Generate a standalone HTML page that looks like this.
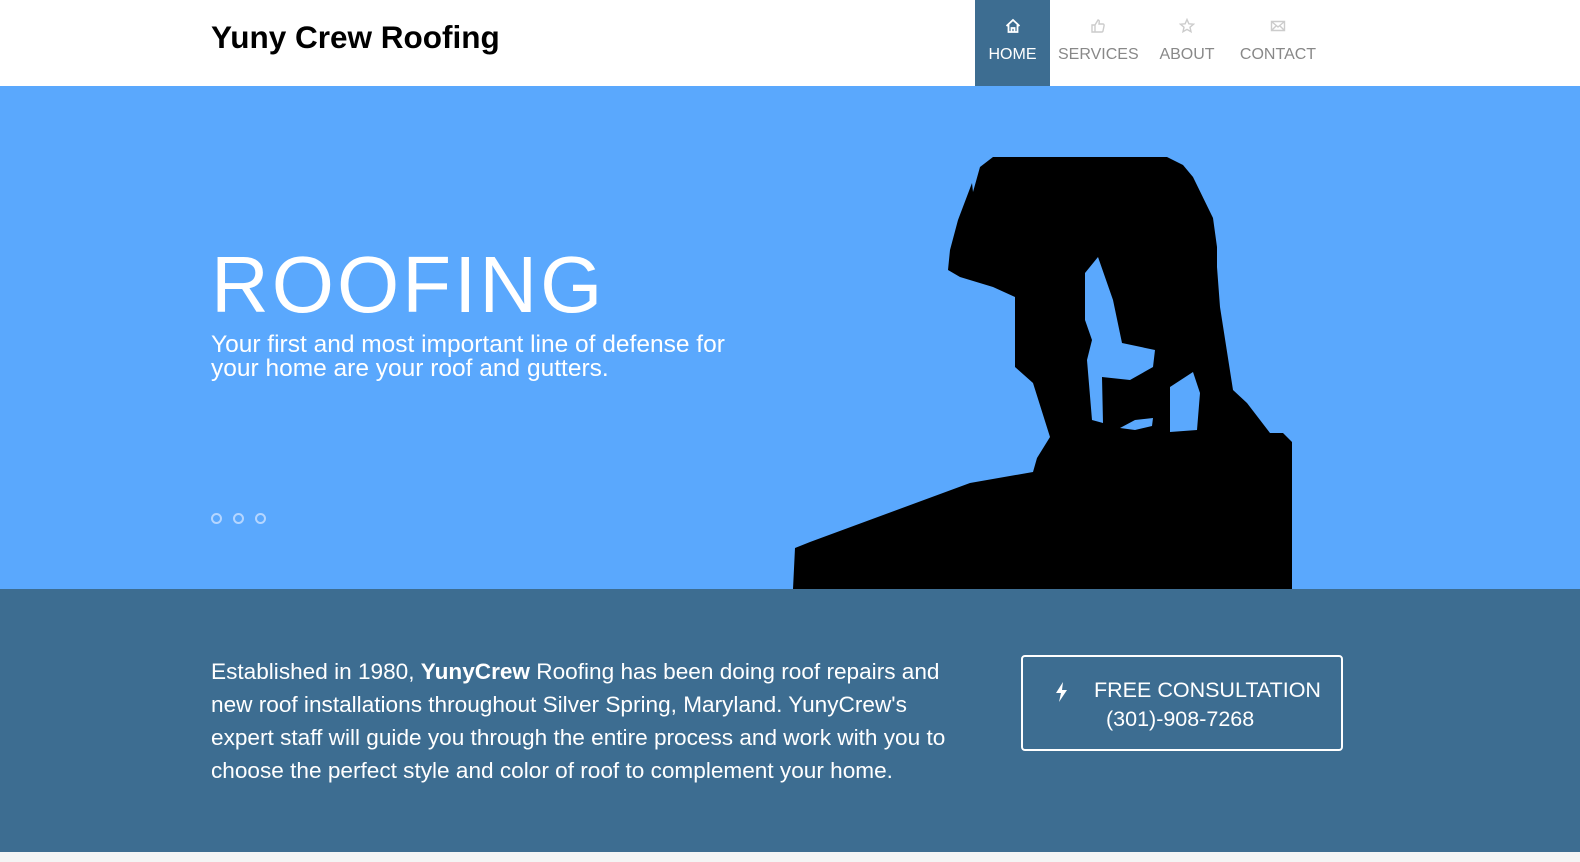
<!DOCTYPE html>
<html><head><meta charset="utf-8"><style>
*{margin:0;padding:0;box-sizing:border-box}
body{width:1580px;height:862px;overflow:hidden;font-family:"Liberation Sans",sans-serif;background:#f4f4f4;position:relative}
.hdr{position:absolute;left:0;top:0;width:1580px;height:86px;background:#fff}
.logo{position:absolute;left:211px;top:19px;font-size:31.5px;font-weight:bold;color:#000;letter-spacing:0}
.nav{position:absolute;top:0;height:86px;text-align:center;font-size:16px;color:#888}
.nav svg{position:absolute;top:18px;left:50%;margin-left:-8px}
.nav span{position:absolute;top:46px;left:0;right:0}
.hero{position:absolute;left:0;top:86px;width:1580px;height:503px;background:#5aa8fd}
.h1{position:absolute;left:211px;top:240px;font-size:80px;color:#fff;letter-spacing:3px;line-height:90px}
.sub{position:absolute;left:211px;top:333px;font-size:24.5px;color:#fff;line-height:24px;white-space:nowrap}
.dot{position:absolute;top:513px;width:11px;height:11px;border:2px solid #b5d6ff;border-radius:50%}
.bot{position:absolute;left:0;top:589px;width:1580px;height:263px;background:#3d6d91}
.txt{position:absolute;left:211px;top:655px;font-size:22.6px;line-height:33px;color:#fff;white-space:nowrap}
.btn{position:absolute;left:1021px;top:655px;width:322px;height:96px;border:2px solid #fff;border-radius:4px;color:#fff;font-size:21.5px}
</style></head><body>
<div class="hdr">
<div class="logo">Yuny Crew Roofing</div>
<div class="nav" style="left:975px;width:75px;background:#3d6d91;color:#fff">
<svg width="16" height="16" viewBox="0 0 16 16"><path d="M1.5 8L8 2l6.5 6M3.5 6.5V14h9V6.5M6.5 14v-4h3v4" fill="none" stroke="#fff" stroke-width="1.8"/></svg><span>HOME</span></div>
<div class="nav" style="left:1058px;width:80px">
<svg width="16" height="16" viewBox="0 0 16 16"><path d="M2 7h3v7H2zM5 7l3-5c1 0 1.5 1 1.2 2L9 6h4c1 0 1.3 1 1 2l-1 5c-.2.7-.7 1-1.3 1H5" fill="none" stroke="#ccc" stroke-width="1.4"/></svg><span>SERVICES</span></div>
<div class="nav" style="left:1155px;width:64px">
<svg width="16" height="16" viewBox="0 0 16 16"><path d="M8 1.5l1.9 4.3 4.6.4-3.5 3 1 4.5L8 11.4 4 13.7l1-4.5-3.5-3 4.6-.4z" fill="none" stroke="#ccc" stroke-width="1.4"/></svg><span>ABOUT</span></div>
<div class="nav" style="left:1238px;width:80px">
<svg width="16" height="16" viewBox="0 0 16 16"><path d="M1.5 3.5h13v9h-13zM1.5 3.5L8 9l6.5-5.5M1.5 12.5l4.5-4.5M14.5 12.5L10 8" fill="none" stroke="#ccc" stroke-width="1.4"/></svg><span>CONTACT</span></div>
</div>
<div class="hero"></div>
<svg style="position:absolute;left:0;top:0" width="1580" height="862"><path fill-rule="evenodd" fill="#000" d="M973 192L980 167L993 157L1167 157L1183 165L1193 177L1213 218L1217 247L1217 267L1220 307L1233 390L1247 403L1270 433L1283 433L1292 442L1292 589L793 589L795 548L810 542L970 483L1033 472L1037 458L1050 437L1033 383L1015 367L1015 297L993 287L960 277L948 270L950 250L958 220L972 183Z M1098 257L1085 273L1085 320L1092 340L1087 360L1092 420L1103 423L1102 377L1130 380L1153 367L1155 350L1122 343L1113 300Z M1170 387L1193 372L1200 393L1197 430L1170 432Z M1153 418L1135 420L1120 428L1135 430L1152 426Z"/></svg>
<div class="h1">ROOFING</div>
<div class="sub">Your first and most important line of defense for<br>your home are your roof and gutters.</div>
<div class="dot" style="left:211px"></div><div class="dot" style="left:233px"></div><div class="dot" style="left:255px"></div>
<div class="bot"></div>
<div class="txt">Established in 1980, <b>YunyCrew</b> Roofing has been doing roof repairs and<br>new roof installations throughout Silver Spring, Maryland. YunyCrew's<br>expert staff will guide you through the entire process and work with you to<br>choose the perfect style and color of roof to complement your home.</div>
<div class="btn">
<svg style="position:absolute;left:31px;top:24px" width="16" height="22" viewBox="0 0 16 22"><path d="M9 1L2 12h5l-2 9 8-12H8z" fill="#fff"/></svg>
<div style="position:absolute;left:71px;top:21px;white-space:nowrap">FREE CONSULTATION</div>
<div style="position:absolute;left:83px;top:50px;white-space:nowrap">(301)-908-7268</div>
</div>
</body></html>
